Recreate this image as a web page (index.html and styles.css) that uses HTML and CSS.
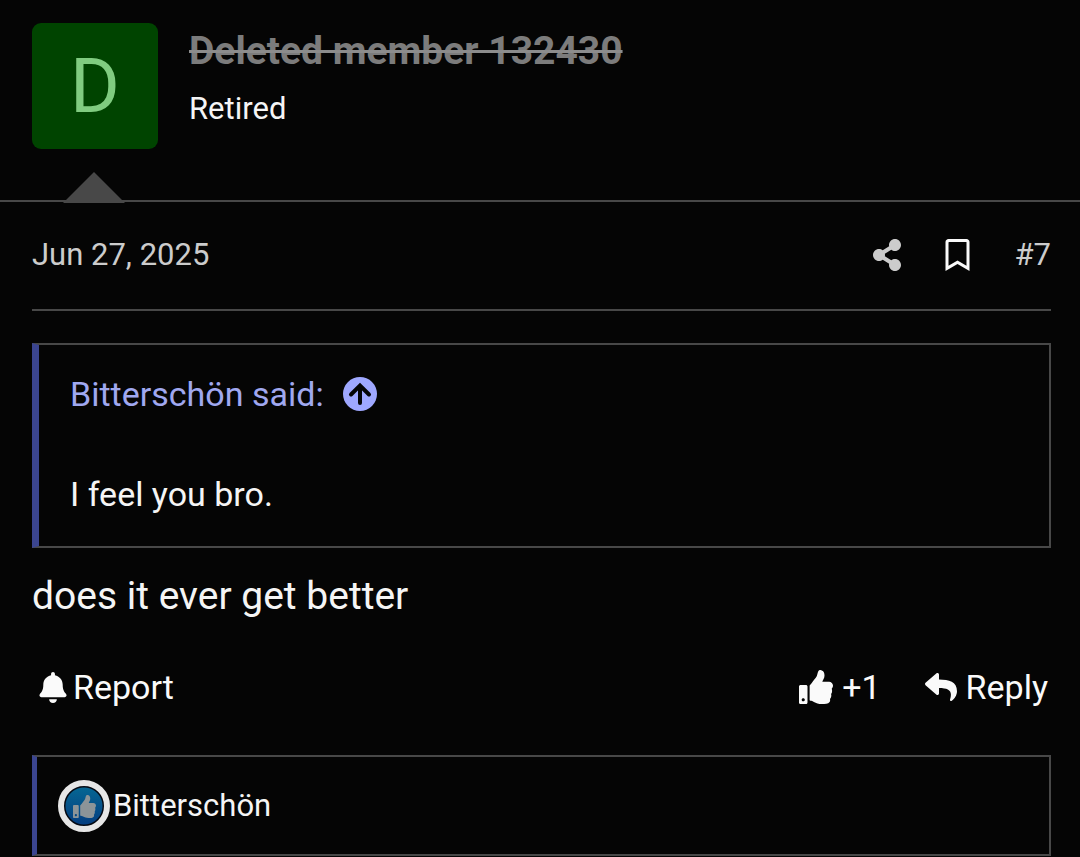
FILE: index.html
```html
<!DOCTYPE html>
<html lang="en">
<head>
    <meta charset="UTF-8">
    <meta name="viewport" content="width=device-width, initial-scale=1.0">
    <title>Thread</title>
    <link rel="stylesheet" href="styles.css">
</head>
<body>
    <!-- shared thumb shape, used by the like button and the reaction badge -->
    <svg class="symbols" aria-hidden="true">
        <symbol id="thumb" viewBox="0 0 512 512">
            <path d="M104 224H24c-13.255 0-24 10.745-24 24v240c0 13.255 10.745 24 24 24h80c13.255 0 24-10.745 24-24V248c0-13.255-10.745-24-24-24zM64 472c-13.255 0-24-10.745-24-24s10.745-24 24-24 24 10.745 24 24-10.745 24-24 24zM384 81.452c0 42.416-25.97 66.208-33.277 94.548h101.723c33.397 0 59.397 27.746 59.553 58.098.084 17.938-7.546 37.249-19.439 49.197l-.11.11c9.836 23.337 8.237 56.037-9.308 79.469 8.681 25.895-.069 57.704-16.382 74.757 4.298 17.598 2.244 32.575-6.148 44.632C440.202 511.587 389.616 512 346.839 512l-2.845-.001c-48.287-.017-87.806-17.598-119.56-31.725-15.957-7.099-36.821-15.887-52.651-16.178-6.54-.12-11.783-5.457-11.783-11.998v-213.77c0-3.2 1.282-6.271 3.558-8.521 39.614-39.144 56.648-80.587 89.117-113.111 14.804-14.832 20.188-37.236 25.393-58.902C282.515 39.293 291.817 0 312 0c24 0 72 8 72 81.452z"/>
        </symbol>
    </svg>

    <article class="post">
        <header class="post-user">
            <div class="avatar">D</div>
            <div class="user-info">
                <h4 class="username">Deleted member 132430</h4>
                <div class="user-title">Retired</div>
            </div>
            <span class="user-arrow"></span>
        </header>

        <div class="post-main">
            <div class="post-meta">
                <a class="post-date" href="#post-7"><time datetime="2025-06-27">Jun 27, 2025</time></a>
                <div class="meta-links">
                    <a href="#share" aria-label="Share">
                        <svg class="icon-share" viewBox="0 0 448 512"><path d="M352 320c-22.608 0-43.387 7.819-59.79 20.895l-102.486-64.054a96.551 96.551 0 0 0 0-41.683l102.486-64.054C308.613 184.181 329.392 192 352 192c53.019 0 96-42.981 96-96S405.019 0 352 0s-96 42.981-96 96c0 7.158.79 14.13 2.276 20.841L155.79 180.895C139.387 167.819 118.608 160 96 160c-53.019 0-96 42.981-96 96s42.981 96 96 96c22.608 0 43.387-7.819 59.79-20.895l102.486 64.054A96.301 96.301 0 0 0 256 416c0 53.019 42.981 96 96 96s96-42.981 96-96-42.981-96-96-96z"/></svg>
                    </a>
                    <a href="#bookmark" aria-label="Bookmark">
                        <svg class="icon-bookmark" viewBox="0 0 384 512"><path d="M336 0H48C21.490 0 0 21.490 0 48v464l192-112 192 112V48c0-26.510-21.490-48-48-48zm0 428.430l-144-84-144 84V54a6 6 0 0 1 6-6h276c3.314 0 6 2.683 6 5.996V428.430z"/></svg>
                    </a>
                    <a class="post-number" href="#post-7">#7</a>
                </div>
            </div>

            <blockquote class="quote">
                <a class="quote-source" href="#post-6">
                    Bitterschön said:
                    <svg class="icon-up" viewBox="0 0 34 34"><circle cx="17" cy="17" r="17"/><path d="M17 26V9M8 17.500L17 8.500l9 9"/></svg>
                </a>
                <p class="quote-text">I feel you bro.</p>
            </blockquote>

            <p class="message">does it ever get better</p>

            <div class="actions">
                <button class="action action-report" type="button">
                    <svg class="icon-bell" viewBox="0 0 448 512"><path d="M224 512c35.320 0 63.970-28.650 63.970-64H160.030c0 35.350 28.650 64 63.970 64zm215.390-149.710c-19.320-20.760-55.470-51.990-55.470-154.290 0-77.700-54.480-139.900-127.940-155.160V32c0-17.670-14.320-32-31.980-32s-31.980 14.330-31.980 32v20.840C118.560 68.100 64.080 130.300 64.080 208c0 102.300-36.150 133.530-55.470 154.290-6 6.450-8.660 14.160-8.610 21.710.11 16.400 12.980 32 32.100 32h383.800c19.120 0 32-15.600 32.100-32 .05-7.550-2.610-15.270-8.610-21.710z"/></svg>
                    Report
                </button>
                <div class="actions-right">
                    <button class="action" type="button">
                        <svg class="icon-like"><use href="#thumb"/></svg>
                        +1
                    </button>
                    <button class="action" type="button">
                        <svg class="icon-reply" viewBox="0 0 512 512"><path d="M8.309 189.836L184.313 37.851C199.719 24.546 224 35.347 224 56.015v80.053c160.629 1.839 288 34.032 288 186.258 0 61.441-39.581 122.309-83.333 154.132-13.653 9.931-33.111-2.533-28.077-18.631 45.344-145.012-21.507-183.510-176.590-185.742V360c0 20.700-24.300 31.453-39.687 18.164l-176.004-152c-11.071-9.562-11.086-26.753 0-36.328z"/></svg>
                        Reply
                    </button>
                </div>
            </div>

            <div class="reactions">
                <span class="badge">
                    <svg class="icon-badge"><use href="#thumb"/></svg>
                </span>
                <a href="#reactions">Bitterschön</a>
            </div>
        </div>
    </article>
</body>
</html>
```

FILE: styles.css
```css
* {
    box-sizing: border-box;
}

body {
    margin: 0;
    background-color: #050505;
    color: #f5f5f5;
    font-family: Roboto, "Liberation Sans", sans-serif;
    font-size: 34px;
    line-height: 40px;
}

a {
    color: inherit;
    text-decoration: none;
}

svg {
    display: block;
    fill: currentColor;
}

.symbols {
    position: absolute;
    width: 0;
    height: 0;
}

/* user strip */
.post-user {
    position: relative;
    display: flex;
    gap: 31px;
    padding: 23px 32px 51px;
    border-bottom: 2px solid #484848;
}

.avatar {
    width: 126px;
    height: 126px;
    border-radius: 9px;
    background-color: #004400;
    color: #80cc80;
    font-size: 76px;
    line-height: 126px;
    text-align: center;
}

.user-info {
    display: flex;
    flex-direction: column;
    gap: 18px;
    padding-top: 8px;
}

.username {
    margin: 0;
    color: #7c7c7c;
    font-size: 39px;
    font-weight: 700;
    text-decoration: line-through;
    text-decoration-color: #8c8c8c;
}

.user-title {
    font-size: 31px;
}

.user-arrow {
    position: absolute;
    left: 63px;
    bottom: -3px;
    border: 31px solid transparent;
    border-top: 0;
    border-bottom-color: #484848;
}

/* post body */
.post-main {
    padding: 0 29px 0 32px;
}

.post-meta {
    display: flex;
    justify-content: space-between;
    align-items: center;
    padding: 33px 0 34px;
    border-bottom: 2px solid #484848;
    color: #cccccc;
    font-size: 31px;
}

.meta-links {
    display: flex;
    align-items: center;
    gap: 44px;
}

.icon-share {
    width: 28px;
    height: 32px;
}

.icon-bookmark {
    width: 25px;
    height: 32px;
    color: #fafafa;
}

.quote {
    margin: 32px 0 0;
    padding: 29px 31px 32px;
    border: 2px solid #484848;
    border-left: 7px solid #3b4590;
}

.quote-source {
    display: flex;
    align-items: center;
    gap: 19px;
    color: #a0a8f0;
}

.icon-up {
    width: 34px;
    height: 34px;
    color: #9fa8ff;
}

.icon-up path {
    fill: none;
    stroke: #050505;
    stroke-width: 4;
    stroke-linecap: round;
}

.quote-text {
    margin: 60px 0 0;
}

.message {
    margin: 28px 0 51px;
    font-size: 39px;
}

.actions,
.actions-right,
.action {
    display: flex;
    align-items: center;
}

.actions {
    justify-content: space-between;
    padding: 0 3px 0 7px;
}

.actions-right {
    gap: 44px;
}

.action {
    gap: 9px;
    padding: 0;
    border: 0;
    background: none;
    color: #fafafa;
    font: inherit;
    cursor: pointer;
}

.action-report {
    gap: 6px;
}

.icon-bell {
    width: 28px;
    height: 31px;
}

.icon-like {
    width: 34px;
    height: 34px;
}

.icon-reply {
    width: 32px;
    height: 32px;
}

/* who reacted */
.reactions {
    display: flex;
    align-items: center;
    gap: 3px;
    margin-top: 48px;
    padding: 23px 21px 22px;
    border: 2px solid #484848;
    border-left: 5px solid #3b4590;
    font-size: 31px;
}

.badge {
    display: flex;
    justify-content: center;
    align-items: center;
    width: 52px;
    height: 52px;
    border: 6px solid #e6e6e6;
    border-radius: 50%;
    background: radial-gradient(circle, transparent 18px, #050a14 19px), linear-gradient(#066894, #043c80);
}

.icon-badge {
    width: 23px;
    height: 23px;
    color: #8c9498;
}
```
